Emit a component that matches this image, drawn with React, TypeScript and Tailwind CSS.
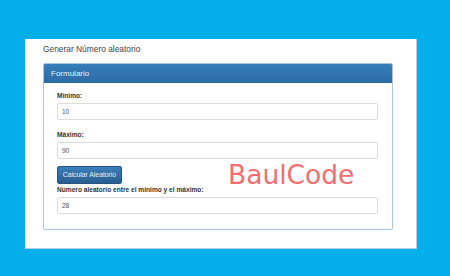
export default function App() {
  return (
    <div className="relative w-[450px] h-[276px] bg-[#04afe9] overflow-hidden pt-[39px] pl-[25px] font-['Liberation_Sans',Arial,sans-serif]">
      <div className="w-[392px] h-[210px] bg-white border-r border-b border-[#b9cfdc] pl-[18px] pt-[5px]">
        <div className="text-[8.4px] leading-[11px] text-[#444]">Generar Número aleatorio</div>

        <div className="mt-[8px] w-[350px] h-[167px] border border-[#a9c3df] rounded-[2px] overflow-hidden">
          <div className="h-[19px] bg-gradient-to-b from-[#357dbb] to-[#2d6ca5] text-[#e9f1f9] text-[8px] leading-[19px] pl-[7px]">
            Formulario
          </div>
          <div className="px-[13px] pt-[8px]">
            <Label text="Mínimo:" />
            <Field value="10" />
            <div className="mt-[10px]" />
            <Label text="Máximo:" />
            <Field value="90" />
            <button className="mt-[7px] h-[18px] w-[65px] rounded-[2px] bg-gradient-to-b from-[#3a7fbc] to-[#275d8e] border border-[#245580] text-[#e8eff7] text-[6.8px] leading-none">
              Calcular Aleatorio
            </button>
            <div className="mt-[1px]" />
            <Label text="Número aleatorio entre el mínimo y el máximo:" />
            <Field value="28" />
          </div>
        </div>
      </div>

      {/* watermark */}
      <div className="absolute left-[228px] top-[157px] text-[26.5px] leading-[36px] text-[#f36e70] font-['DejaVu_Sans',sans-serif]">
        BaulCode
      </div>
    </div>
  );
}

function Label({ text }: { text: string }) {
  return <div className="text-[6.6px] leading-[9px] font-bold text-[#333] mb-[3px]">{text}</div>;
}

function Field({ value }: { value: string }) {
  return (
    <div className="w-[321px] h-[17px] border border-[#dcdcdc] rounded-[2px] bg-white text-[6.5px] leading-[15px] text-[#555] pl-[4px]">
      {value}
    </div>
  );
}
